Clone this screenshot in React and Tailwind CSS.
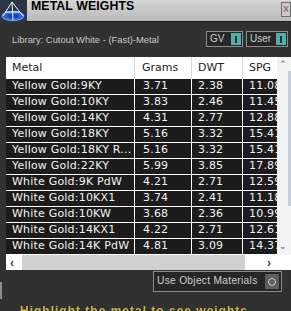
import React from 'react';

const rows = [
  ['Yellow Gold:9KY', '3.71', '2.38', '11.08'],
  ['Yellow Gold:10KY', '3.83', '2.46', '11.45'],
  ['Yellow Gold:14KY', '4.31', '2.77', '12.88'],
  ['Yellow Gold:18KY', '5.16', '3.32', '15.41'],
  ['Yellow Gold:18KY R...', '5.16', '3.32', '15.41'],
  ['Yellow Gold:22KY', '5.99', '3.85', '17.89'],
  ['White Gold:9K PdW', '4.21', '2.71', '12.59'],
  ['White Gold:10KX1', '3.74', '2.41', '11.18'],
  ['White Gold:10KW', '3.68', '2.36', '10.99'],
  ['White Gold:14KX1', '4.22', '2.71', '12.61'],
  ['White Gold:14K PdW', '4.81', '3.09', '14.37'],
];

const Logo = () => (
  <svg width="27" height="22" viewBox="0 0 27 22">
    <rect width="27" height="22" fill="#2c3648" />
    <ellipse cx="13" cy="16" rx="11" ry="4.5" fill="#2a64d6" stroke="#9cc0ff" strokeWidth="0.8" />
    <ellipse cx="13" cy="16" rx="6" ry="2" fill="#1746b0" />
    <path d="M12 2 L3 16 M12 2 L23 16 M12 2 L13 20 M5 12 L20 12" stroke="#f2f6ff" strokeWidth="1" fill="none" />
  </svg>
);

// small on/off switch used in the library row
const Toggle = ({ label, width }) => (
  <div className={`flex items-center justify-between h-[16px] border border-[#8c8c8c] bg-[#262626] pl-[3px] pr-[1px] ${width}`}>
    <span className="text-[10px] leading-none text-[#d0d0d0]">{label}</span>
    <div className="w-[10px] h-[12px] bg-[#55aea6] flex items-center justify-center">
      <div className="w-[2px] h-[7px] bg-[#1d3533]" />
    </div>
  </div>
);

export default function App() {
  return (
    <div className="w-[291px] h-[311px] overflow-hidden bg-[#313131] flex flex-col font-['Liberation_Sans',sans-serif]">
      {/* Title bar */}
      <div className="h-[22px] flex items-start bg-gradient-to-b from-[#d6d6d6] to-[#b9b9b9] border-b border-[#1c1c1c] shrink-0">
        <Logo />
        <div className="pl-[4px] text-[12.3px] font-bold leading-[13px] text-black tracking-[0.1px]">METAL WEIGHTS</div>
        <div className="ml-auto mt-[2px] w-[10px] h-[15px] border border-[#6e6e6e] bg-[#cfc6c6] text-[#5a5a5a] text-[9px] leading-[13px] pl-[1px]">X</div>
      </div>

      {/* Library row */}
      <div className="h-[35px] flex items-center pl-[12px] pr-[3px] shrink-0">
        <span className="text-[9.4px] text-[#c9c9c9] leading-none pt-[1px]">Library: Cutout White - (Fast)-Metal</span>
        <div className="ml-auto flex gap-[3px] mt-[-1px]">
          <Toggle label="GV" width="w-[37px]" />
          <Toggle label="User" width="w-[42px]" />
        </div>
      </div>

      {/* Table */}
      <div className="flex ml-[6px] shrink-0">
        <div className="w-[271px] overflow-hidden font-['DejaVu_Sans',sans-serif] text-[11px]">
          <div className="flex h-[22px] bg-white text-[#222]">
            <div className="w-[129px] shrink-0 pl-[6px] flex items-center border-r border-[#d8d8d8]">Metal</div>
            <div className="w-[57px] shrink-0 pl-[7px] flex items-center border-r border-[#d8d8d8]">Grams</div>
            <div className="w-[51px] shrink-0 pl-[6px] flex items-center border-r border-[#d8d8d8]">DWT</div>
            <div className="w-[40px] shrink-0 pl-[6px] flex items-center">SPG</div>
          </div>
          {rows.map((r, i) => (
            <div key={i} className="flex h-[16px] bg-[#1c1c1c] text-[#f2f2f2] border-b border-white tracking-[0.2px]">
              <div className="w-[129px] shrink-0 pl-[6px] flex items-center border-r border-white whitespace-nowrap">{r[0]}</div>
              <div className="w-[57px] shrink-0 pl-[8px] flex items-center border-r border-white">{r[1]}</div>
              <div className="w-[51px] shrink-0 pl-[6px] flex items-center border-r border-white">{r[2]}</div>
              <div className="w-[40px] shrink-0 pl-[6px] flex items-center whitespace-nowrap">{r[3]}</div>
            </div>
          ))}
        </div>
        {/* vertical scrollbar */}
        <div className="w-[14px] h-[198px] bg-[#f3f3f3] flex flex-col items-center justify-between relative">
          <span className="text-[9px] leading-none text-[#555] mt-[3px] pr-[2px]">&#8963;</span>
          <div className="absolute right-0 top-[14px] w-[3px] h-[135px] bg-[#c5cdd8]" />
          <span className="text-[9px] leading-none text-[#555] mb-[4px] pr-[2px]">&#8964;</span>
        </div>
      </div>

      {/* horizontal scrollbar */}
      <div className="flex h-[15px] ml-[6px] bg-white items-center shrink-0">
        <div className="w-[16px] text-[12px] font-bold text-[#444] leading-none pl-[4px]">&#8249;</div>
        <div className="w-[223px] h-full bg-[#d1d1d1]" />
        <div className="flex-1 flex justify-end pr-[20px] text-[12px] font-bold text-[#444] leading-none">&#8250;</div>
      </div>

      {/* bottom area */}
      <div className="flex items-start h-[29px] pt-[1px] shrink-0">
        <div className="w-[2px] h-[17px] mt-[11px] bg-[#8d8d8d]" />
        <div className="ml-auto mr-[9px] w-[129px] h-[21px] border border-[#8c8c8c] bg-[#262626] flex items-center pl-[3px] pr-[2px]">
          <span className="text-[10.2px] text-[#cfcfcf] leading-none tracking-[0.3px]">Use Object Materials</span>
          <div className="ml-auto w-[14px] h-[15px] bg-[#5e5e5e] flex items-center justify-center">
            <div className="w-[8px] h-[8px] rounded-full border border-[#cfcfcf]" />
          </div>
        </div>
      </div>
      <div className="pl-[20px] mt-[5px] text-[12px] leading-[14px] font-bold text-[#c8b24a] blur-[0.6px] whitespace-nowrap tracking-[1px]">
        Highlight the metal to see weights
      </div>
    </div>
  );
}
